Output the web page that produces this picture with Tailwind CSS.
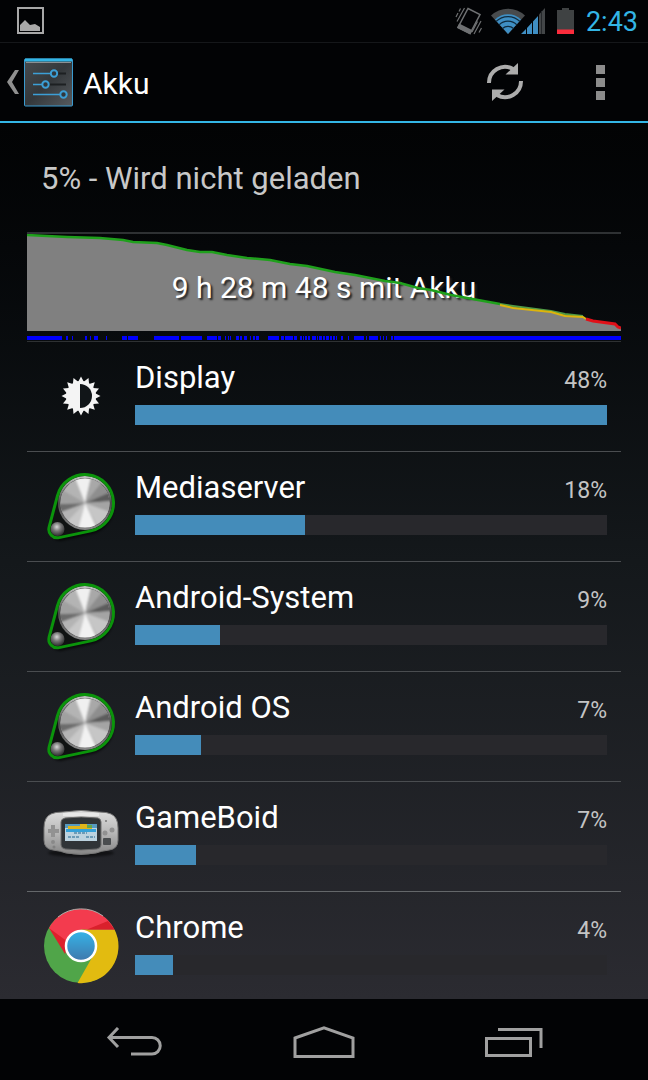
<!DOCTYPE html>
<html lang="de">
<head>
  <meta charset="UTF-8" />
  <meta name="viewport" content="width=device-width, initial-scale=1" />
  <title>Akku</title>
  <script src="https://cdn.jsdelivr.net/npm/@tailwindcss/browser@4"></script>
</head>
<body class="bg-black font-['Roboto',sans-serif]">

  <!-- Shared icon for system processes -->
  <svg class="absolute w-0 h-0" aria-hidden="true">
    <defs>
      <linearGradient id="rim" x1="0" y1="0" x2="0" y2="1">
        <stop offset="0" stop-color="#c4c4c4" /><stop offset=".5" stop-color="#4a4a4a" /><stop offset="1" stop-color="#8a8a8a" />
      </linearGradient>
      <radialGradient id="ball" cx=".45" cy=".35" r=".6">
        <stop offset="0" stop-color="#d8d8d8" /><stop offset=".5" stop-color="#777" /><stop offset="1" stop-color="#3a3a3a" />
      </radialGradient>
      <clipPath id="knobClip"><circle cx="42" cy="35" r="24.500" /></clipPath>
      <filter id="soft"><feGaussianBlur stdDeviation="1.3" /></filter>
      <symbol id="knob" viewBox="0 0 76 76">
        <path d="M16 31A28 28 0 1 1 49 66L18 73A9 9 0 0 1 8 63Z" fill="#000" opacity=".6" filter="url(#soft)" />
        <path d="M14.500 27.600A28.500 28.500 0 1 1 47.900 62.900L16.100 69.600A8.500 8.500 0 0 1 6.100 59.100Z" fill="#101312" />
        <circle cx="42" cy="35" r="27" fill="url(#rim)" />
        <circle cx="42" cy="35" r="25" fill="#555" />
        <g clip-path="url(#knobClip)">
          <circle cx="42" cy="35" r="25" fill="#b4b4b4" />
          <g filter="url(#soft)">
            <path d="M42 35L30 5H49Z" fill="#f0f0f0" />
            <path d="M42 35L49 5L62 10Z" fill="#a8a8a8" />
            <path d="M42 35L62 10L72 22Z" fill="#8e8e8e" />
            <path d="M42 35L72 22V33Z" fill="#5c5c5c" />
            <path d="M42 35L72 33V46Z" fill="#a4a4a4" />
            <path d="M42 35L72 46L58 64Z" fill="#c6c6c6" />
            <path d="M42 35L56 65L34 65Z" fill="#f2f2f2" />
            <path d="M42 35L34 65L20 58Z" fill="#c8c8c8" />
            <path d="M42 35L12 46V36Z" fill="#6c6c6c" />
            <path d="M42 35L12 36V18Z" fill="#a0a0a0" />
          </g>
        </g>
        <circle cx="14.500" cy="61" r="7" fill="url(#ball)" />
        <path d="M14.500 27.600A28.500 28.500 0 1 1 47.900 62.900L16.100 69.600A8.500 8.500 0 0 1 6.100 59.100Z" fill="none" stroke="#0b940b" stroke-width="3" />
      </symbol>
    </defs>
  </svg>

  <div class="min-h-screen flex flex-col">

    <!-- Status bar -->
    <header class="h-[43px] shrink-0 flex items-center pl-4 pr-2.5 border-b border-[#15171a] bg-[#020305]">
      <svg class="w-7 h-7" viewBox="0 0 28 28">
        <rect x="2" y="1" width="25" height="25" fill="none" stroke="#a8a8a8" stroke-width="2" />
        <path d="M4 24V18L9 13L14 18L19 17L24 20V24Z" fill="#a8a8a8" />
      </svg>
      <div class="ml-auto flex items-center">
        <svg class="w-7 h-7 mr-2" viewBox="0 0 28 28" fill="none" stroke="#6f7173" stroke-width="1.500">
          <path d="M13 1.500L25 7.500L15 26.500L3 20.500Z" />
          <path d="M3 20.500L15 26.500L16.500 23.500L4.500 17.500Z" fill="#6f7173" />
          <path d="M9.500 1L2 14.500M5.500 1.500L4 4.500M3 6L1 10M26 14L19 27M22.500 14.500L17 25M26.500 21L24 25.500" stroke-width="1.200" />
        </svg>
        <svg class="w-[34px] h-7" viewBox="0 0 34 28">
          <path d="M17 27L0 8.500A24.500 24.500 0 0 1 34 8.500Z" fill="#484b4d" />
          <path d="M17 27L4 12.500A19 19 0 0 1 30 12.500Z" fill="#3f8fc4" />
          <path d="M5 14.500A17 17 0 0 1 29 14.500M8 18A12.500 12.500 0 0 1 26 18M11.500 21.500A8 8 0 0 1 22.500 21.500" fill="none" stroke="#102c40" stroke-width="1.200" />
        </svg>
        <svg class="-ml-1 w-6 h-7" viewBox="0 0 24 28">
          <path d="M0 27L5 22V27ZM6 21L11 15.500V27H6ZM12 14.500L17 9V27H12Z" fill="#3f8fc4" />
          <path d="M18 7.500L24 1V27H18Z" fill="#434648" />
          <path d="M20.500 4V27" stroke="#24272a" />
        </svg>
        <svg class="ml-3 w-[17px] h-7" viewBox="0 0 17 28">
          <path d="M5 1H12V3H17V23H0V3H5Z" fill="#3f4243" />
          <path d="M0 22.500H17V27H0Z" fill="#fb2c3c" />
        </svg>
        <span class="ml-3 mt-0.5 text-[27px] leading-none text-[#33b5e5]">2:43</span>
      </div>
    </header>

    <!-- Action bar -->
    <div class="h-20 shrink-0 flex items-center border-b-2 border-[#33b5e5] bg-[#020305] pl-1.5">
      <a href="#" class="flex items-center gap-1" aria-label="Zurück zu Einstellungen">
        <svg class="w-3.5 h-[26px]" viewBox="0 0 14 26"><path d="M9 1H13L6 13L13 25H9L1 13Z" fill="#8f8f8f" /></svg>
        <svg class="w-[49px] h-[49px]" viewBox="0 0 49 49">
          <defs>
            <linearGradient id="tile" x1="0" y1="0" x2="1" y2="1"><stop offset="0" stop-color="#484c50" /><stop offset=".5" stop-color="#34383b" /><stop offset="1" stop-color="#565a5e" /></linearGradient>
          </defs>
          <rect x=".5" y="1" width="48" height="47" rx="1" fill="url(#tile)" stroke="#3a9bd0" />
          <path d="M1 2H48" stroke="#33b5e5" stroke-width="3" />
          <path d="M2 4.500H47" stroke="#8b8f92" />
          <path d="M34 15.500H42M25 26.500H42" stroke="#1d2022" stroke-width="2" />
          <g fill="#30373c" stroke="#3c9fd6" stroke-width="2">
            <path d="M9 15.500H27M9 26.500H18M9 36.500H36" stroke-width="1.500" />
            <circle cx="30" cy="15.500" r="3.200" /><circle cx="21.500" cy="26.500" r="3.200" /><circle cx="39.500" cy="36.500" r="3.200" />
          </g>
        </svg>
      </a>
      <h1 class="ml-2.5 mt-0.5 text-[30px] text-white">Akku</h1>
      <button class="ml-auto w-[94px] h-full flex items-center justify-center" aria-label="Aktualisieren">
        <svg class="w-10 h-10" viewBox="0 0 40 40">
          <path d="M4 21A16 16 0 0 1 28 7M36 19A16 16 0 0 1 12 33" fill="none" stroke="#acacac" stroke-width="4" />
          <path d="M33 1V12.500H20.500ZM7 39V27.500H19.500Z" fill="#acacac" />
        </svg>
      </button>
      <button class="w-24 h-full flex items-center justify-center" aria-label="Weitere Optionen">
        <svg class="w-[9px] h-[35px]" viewBox="0 0 9 35"><path d="M0 0H9V9H0ZM0 13H9V22H0ZM0 26H9V35H0Z" fill="#8c8c8c" /></svg>
      </button>
    </div>

    <main class="flex-1 px-[27px] bg-linear-to-b from-[#020304] via-[#14181b] to-[#2b2b31]">
      <h2 class="h-[109px] pl-3.5 text-[31px] leading-[112px] text-[#c8c8c8]">5% - Wird nicht geladen</h2>

      <!-- Battery history -->
      <section class="border-t-2 border-b border-[#2e3133]">
        <div class="grid grid-rows-[97px]">
          <svg class="col-start-1 row-start-1 w-full h-full" viewBox="0 0 594 97" preserveAspectRatio="none">
            <path d="M0 1L40 3L73 4L96 6L106 8L130 9L140 11L160 16L173 18L185 18L200 21L220 24L243 26L263 30L280 32L308 38L328 41L358 47L373 49L391 54L404 56L424 61L451 66L473 70L486 73L524 78L538 81L556 83L559 85L588 90L594 94V97H0Z" fill="#808080" />
          </svg>
          <p class="col-start-1 row-start-1 text-center text-[30px] leading-[108px] text-white text-shadow-[2px_2px_2px_#222]">9 h 28 m 48 s mit Akku</p>
          <svg class="col-start-1 row-start-1 w-full h-full" viewBox="0 0 594 97" preserveAspectRatio="none" fill="none" stroke-width="2.500">
            <path d="M0 1L40 3L73 4L96 6L106 8L130 9L140 11L160 16L173 18L185 18L200 21L220 24L243 26L263 30L280 32L308 38L328 41L358 47L373 49L391 54L404 56L424 61L451 66L473 70" stroke="#1fa01c" />
            <path d="M473 70L486 72L524 77L538 80L556 82" stroke="#4f9a45" stroke-width="2" />
            <path d="M473 71L486 74L524 78L538 82L556 83L559 85" stroke="#dcb40c" stroke-width="2" />
            <path d="M559 85L566 87L588 90L591 93L594 94" stroke="#e01018" stroke-width="3" />
          </svg>
        </div>
        <svg class="mt-[5px] mb-px w-full h-1" viewBox="0 0 594 4" preserveAspectRatio="none">
          <path d="M0 2h35M39 2h2M45 2h1M58 2h2M63 2h1M67 2h4M79 2h1M95 2h5M101 2h10M127 2h25M154 2h21M180 2h10M191 2h3M198 2h1M201 2h1M203 2h1M209 2h3M213 2h2M217 2h3M223 2h1M226 2h2M229 2h3M241 2h11M254 2h3M258 2h8M267 2h3M273 2h2M276 2h1M278 2h2M281 2h2M285 2h4M290 2h1M292 2h3M296 2h2M299 2h3M303 2h2M306 2h2M309 2h1M314 2h2M321 2h1M327 2h10M339 2h1M342 2h9M353 2h1M356 2h1M359 2h1M364 2h2M367 2h227" stroke="#0000ff" stroke-width="4" />
        </svg>
      </section>

      <!-- Consumers -->
      <ul>
        <li class="flex gap-4 pt-4 pb-[17px] pl-4 pr-3.5 border-b border-[#4a4d50]">
          <svg class="w-[76px] h-[76px] shrink-0" viewBox="-38 -38 76 76" fill="#f4f4f4">
            <path id="sun" d="" />
            <circle r="15" />
            <path d="M-1 -12A12 12 0 0 1 -1 12Z" fill="#111518" />
          </svg>
          <div class="flex-1">
            <div class="flex items-baseline justify-between leading-10">
              <span class="text-[31px] text-white">Display</span><span class="text-[23px] text-[#c4c4c4]">48%</span>
            </div>
            <div class="mt-1 h-5 bg-[#28282c]"><div class="h-full bg-[#448cba]" style="width:100%"></div></div>
          </div>
        </li>
        <li class="flex gap-4 pt-4 pb-[17px] pl-4 pr-3.5 border-b border-[#4a4d50]">
          <svg class="w-[76px] h-[76px] shrink-0"><use href="#knob" /></svg>
          <div class="flex-1">
            <div class="flex items-baseline justify-between leading-10">
              <span class="text-[31px] text-white">Mediaserver</span><span class="text-[23px] text-[#c4c4c4]">18%</span>
            </div>
            <div class="mt-1 h-5 bg-[#28282c]"><div class="h-full bg-[#448cba]" style="width:36%"></div></div>
          </div>
        </li>
        <li class="flex gap-4 pt-4 pb-[17px] pl-4 pr-3.5 border-b border-[#4a4d50]">
          <svg class="w-[76px] h-[76px] shrink-0"><use href="#knob" /></svg>
          <div class="flex-1">
            <div class="flex items-baseline justify-between leading-10">
              <span class="text-[31px] text-white">Android-System</span><span class="text-[23px] text-[#c4c4c4]">9%</span>
            </div>
            <div class="mt-1 h-5 bg-[#28282c]"><div class="h-full bg-[#448cba]" style="width:18%"></div></div>
          </div>
        </li>
        <li class="flex gap-4 pt-4 pb-[17px] pl-4 pr-3.5 border-b border-[#4a4d50]">
          <svg class="w-[76px] h-[76px] shrink-0"><use href="#knob" /></svg>
          <div class="flex-1">
            <div class="flex items-baseline justify-between leading-10">
              <span class="text-[31px] text-white">Android OS</span><span class="text-[23px] text-[#c4c4c4]">7%</span>
            </div>
            <div class="mt-1 h-5 bg-[#28282c]"><div class="h-full bg-[#448cba]" style="width:14%"></div></div>
          </div>
        </li>
        <li class="flex gap-4 pt-4 pb-[17px] pl-4 pr-3.5 border-b border-[#64676a]">
          <svg class="w-[76px] h-[76px] shrink-0" viewBox="0 0 76 76">
            <defs>
              <linearGradient id="shell" x1="0" y1="0" x2="0" y2="1"><stop offset="0" stop-color="#dedede" /><stop offset=".5" stop-color="#b8b8b8" /><stop offset="1" stop-color="#858585" /></linearGradient>
            </defs>
            <ellipse cx="38" cy="55" rx="33" ry="4" fill="#000" opacity=".5" filter="url(#soft)" />
            <path d="M8 16Q12 14 20 14Q38 11 56 14Q64 14 68 16Q75 19 75 30V42Q75 51 66 52Q58 53 53 55Q38 58 23 55Q18 53 10 52Q1 51 1 42V30Q1 19 8 16Z" fill="url(#shell)" stroke="#777" />
            <path d="M20 15H56V18H20Z" fill="#e8e8e8" />
            <path d="M22 20Q38 18 55 20Q58 21 58 24V47Q58 50 54 51Q38 53 22 51Q18 50 18 47V24Q18 21 22 20Z" fill="#303437" stroke="#6e6e6e" />
            <rect x="22" y="26" width="32" height="17" fill="#bcd3df" />
            <path d="M22 26H54V30H22Z" fill="#569ac0" /><path d="M25 28H37V26H44V29H49V31H25Z" fill="#dfb51c" /><path d="M44 27H49V30H44Z" fill="#62a64d" />
            <path d="M23 31H53V34H23Z" fill="#35a1d8" /><path d="M31 35H44M25 39H37M43 39H52" stroke="#5289a9" stroke-width="1.500" stroke-dasharray="3 1" />
            <path d="M8 27H12V31H16V35H12V39H8V35H5V31H8Z" fill="#929292" />
            <circle cx="62" cy="35" r="2.500" fill="#919191" /><circle cx="69" cy="32" r="2.500" fill="#919191" /><circle cx="63" cy="23" r="1" fill="#777" />
            <circle cx="10" cy="44" r="2" fill="#898989" /><circle cx="11" cy="49" r="1.500" fill="#808080" />
            <rect x="60" y="40" width="8" height="7" rx="1" fill="#4a4d4f" />
          </svg>
          <div class="flex-1">
            <div class="flex items-baseline justify-between leading-10">
              <span class="text-[31px] text-white">GameBoid</span><span class="text-[23px] text-[#c4c4c4]">7%</span>
            </div>
            <div class="mt-1 h-5 bg-[#28282c]"><div class="h-full bg-[#448cba]" style="width:13%"></div></div>
          </div>
        </li>
        <li class="flex gap-4 pt-4 pb-[15px] pl-4 pr-3.5">
          <svg class="w-[76px] h-[76px] shrink-0" viewBox="0 0 76 76">
            <defs>
              <linearGradient id="hub" x1="0" y1="0" x2="0" y2="1"><stop offset="0" stop-color="#36b4e8" /><stop offset="1" stop-color="#3f78ac" /></linearGradient>
            </defs>
            <circle cx="38" cy="38" r="37" fill="#50a549" />
            <path d="M71.500 21.500A37 37 0 0 1 34.500 75L51 46L38 21.500Z" fill="#e2bb10" />
            <path d="M6 20A37 37 0 0 1 71.500 21.500H38L24 46Z" fill="#f33b4e" />
            <path d="M71.500 21.500H44L65 13Z" fill="#d9202c" /><path d="M6 20L22 46L25 34Z" fill="#dd202c" />
            <path d="M15 9A37 37 0 0 1 60 8" fill="none" stroke="#b4a8a8" />
            <circle cx="38" cy="38" r="15" fill="url(#hub)" stroke="#fff" stroke-width="2.500" />
          </svg>
          <div class="flex-1">
            <div class="flex items-baseline justify-between leading-10">
              <span class="text-[31px] text-white">Chrome</span><span class="text-[23px] text-[#c4c4c4]">4%</span>
            </div>
            <div class="mt-1 h-5 bg-[#28282c]"><div class="h-full bg-[#448cba]" style="width:8%"></div></div>
          </div>
        </li>
      </ul>
    </main>

    <!-- Navigation bar -->
    <nav class="h-[81px] shrink-0 flex justify-center gap-[94px] pt-1 bg-[#020305]">
      <button class="w-24 flex items-center justify-center" aria-label="Zurück">
        <svg class="w-14 h-[30px]" viewBox="0 0 56 30" fill="none" stroke="#a0a0a0" stroke-width="3"><path d="M3 10.500H46A8 8 0 0 1 46 27H25" /><path d="M12 1L3 10.500L12 20" /></svg>
      </button>
      <button class="w-24 flex items-center justify-center" aria-label="Startseite">
        <svg class="w-[62px] h-8" viewBox="0 0 62 32" fill="none" stroke="#a0a0a0" stroke-width="3"><path d="M2 12L31 1.800L60 12V30.500H2Z" /></svg>
      </button>
      <button class="w-24 flex items-center justify-center" aria-label="Letzte Apps">
        <svg class="w-[58px] h-[30px]" viewBox="0 0 58 30" fill="none" stroke="#a0a0a0" stroke-width="3"><path d="M1.500 11.500H45.500V28.500H1.500Z" /><path d="M13 2.500H56V21" /></svg>
      </button>
    </nav>
  </div>

  <script>
    // 16 pointed rays around the brightness icon
    const pts = [];
    for (let i = 0; i < 32; i++) {
      const r = i % 2 ? 14.5 : 19.5, a = i * Math.PI / 16;
      pts.push((r * Math.sin(a)).toFixed(1) + " " + (-r * Math.cos(a)).toFixed(1));
    }
    document.getElementById("sun").setAttribute("d", "M" + pts.join("L") + "Z");
  </script>
</body>
</html>
